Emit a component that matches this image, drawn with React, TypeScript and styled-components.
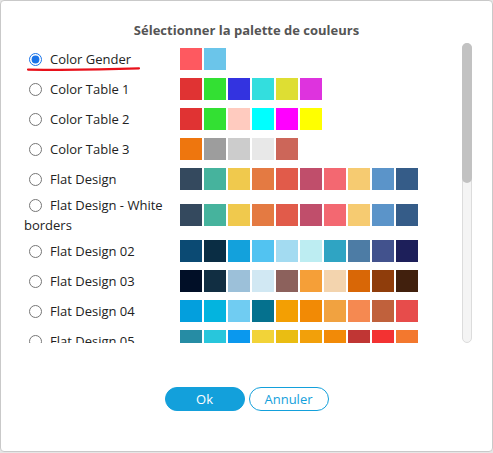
import styled, { createGlobalStyle } from "styled-components";
import { useState } from "react";

const GlobalStyle = createGlobalStyle`
  html, body {
    margin: 0;
    padding: 0;
    background: #e6e6e6;
  }
  body {
    font-family: "Open Sans", "Liberation Sans", sans-serif;
  }
`;

const Dialog = styled.div`
  position: relative;
  box-sizing: border-box;
  width: 493px;
  height: 452px;
  background: #ffffff;
  border: 1px solid #c9c9c9;
  border-radius: 4px;
  display: flex;
  flex-direction: column;
`;

const Title = styled.h2`
  margin: 20px 0 4px;
  font-size: 13px;
  line-height: 18px;
  font-weight: 700;
  color: #555555;
  text-align: center;
`;

const ListFrame = styled.div`
  display: flex;
  margin: 0 20px 0 23px;
  height: 300px;
`;

const List = styled.div`
  flex: 1;
  overflow-y: scroll;
  padding-top: 1px;
  box-sizing: border-box;
  scrollbar-width: none;

  &::-webkit-scrollbar {
    display: none;
  }
`;

const Track = styled.div`
  position: relative;
  box-sizing: border-box;
  width: 10px;
  height: 100%;
  flex: none;
  background: #f4f4f4;
  border: 1px solid #dcdcdc;
  border-radius: 5px;
`;

// thumb sits over the track, its top follows the scroll position
const Thumb = styled.div`
  position: absolute;
  left: -1px;
  right: -1px;
  height: 140px;
  background: #c2c2c2;
  border-radius: 5px;
`;

const Row = styled.div`
  position: relative;
  display: flex;
  align-items: center;
  min-height: 30px;
  gap: 4px;
`;

const Label = styled.label`
  width: 152px;
  flex: none;
  padding: 1px 0;
  font-size: 13px;
  line-height: 20px;
  color: #222222;
  cursor: pointer;
`;

const Radio = styled.input`
  width: 13px;
  height: 13px;
  margin: 0 8px 0 5px;
  vertical-align: -2px;
  accent-color: #1a73e8;
`;

const Swatches = styled.div`
  display: flex;
  gap: 2px;
`;

const Swatch = styled.span<{ $color: string }>`
  width: 22px;
  height: 22px;
  background: ${(p) => p.$color};
`;

const Mark = styled.svg`
  position: absolute;
  left: 0;
  top: 22px;
  pointer-events: none;
`;

const Footer = styled.div`
  display: flex;
  justify-content: center;
  gap: 4px;
  margin-top: 44px;
`;

const Button = styled.button<{ $primary?: boolean }>`
  box-sizing: border-box;
  width: 80px;
  height: 24px;
  padding: 0;
  border-radius: 12px;
  border: 1px solid #13a0db;
  background: ${(p) => (p.$primary ? "#13a0db" : "#ffffff")};
  color: ${(p) => (p.$primary ? "#ffffff" : "#13a0db")};
  font-family: "Open Sans", "Liberation Sans", sans-serif;
  font-size: 13px;
  cursor: pointer;
`;

const flat = [
  "#34495e", "#46b39d", "#f0c94d", "#e47a42", "#e15b4a",
  "#c04e6b", "#f36871", "#f6cb71", "#5b94c9", "#355c88",
];

const palettes: { name: string; colors: string[] }[] = [
  { name: "Color Gender", colors: ["#fe5960", "#6bc5ea"] },
  { name: "Color Table 1", colors: ["#e03333", "#33e033", "#3333e0", "#33dede", "#dede33", "#de33de"] },
  { name: "Color Table 2", colors: ["#e03333", "#33e033", "#ffcbbf", "#00ffff", "#ff00ff", "#ffff00"] },
  { name: "Color Table 3", colors: ["#ee760e", "#9d9d9d", "#cccccc", "#e8e8e8", "#cc6659"] },
  { name: "Flat Design", colors: flat },
  { name: "Flat Design - White borders", colors: flat },
  { name: "Flat Design 02", colors: ["#0b4a73", "#0a2d44", "#13a1dc", "#52c3f1", "#a3dbf1", "#bdedf2", "#2fa4c3", "#4d7ca5", "#42528d", "#1d1f5a"] },
  { name: "Flat Design 03", colors: ["#010f27", "#112e42", "#9cc0d9", "#d1e8f3", "#8c615c", "#f59f38", "#f3d4ae", "#d96706", "#8f3d0b", "#41200d"] },
  { name: "Flat Design 04", colors: ["#039fdd", "#03b4df", "#70ccf2", "#05718e", "#f39f03", "#f28a05", "#f1a240", "#f58951", "#c0613c", "#e74c4b"] },
  { name: "Flat Design 05", colors: ["#268ca4", "#28c6dc", "#0a98ee", "#f2d338", "#eabd12", "#f2a00a", "#f28a07", "#c03634", "#f33232", "#f3782e"] },
  { name: "Flat Design 06", colors: ["#1abc9c", "#2ecc71", "#3498db", "#9b59b6", "#34495e", "#f1c40f", "#e67e22", "#e74c3c", "#ecf0f1", "#95a5a6"] },
  { name: "Flat Design 07", colors: ["#16a085", "#27ae60", "#2980b9", "#8e44ad", "#2c3e50", "#f39c12", "#d35400", "#c0392b", "#bdc3c7", "#7f8c8d"] },
  { name: "Flat Design 08", colors: ["#264653", "#2a9d8f", "#e9c46a", "#f4a261", "#e76f51", "#606c38", "#283618", "#fefae0", "#dda15e", "#bc6c25"] },
  { name: "Flat Design 09", colors: ["#003049", "#d62828", "#f77f00", "#fcbf49", "#eae2b7", "#8ecae6", "#219ebc", "#023047", "#ffb703", "#fb8500"] },
  { name: "Flat Design 10", colors: ["#355070", "#6d597a", "#b56576", "#e56b6f", "#eaac8b", "#22223b", "#4a4e69", "#9a8c98", "#c9ada7", "#f2e9e4"] },
  { name: "Flat Design 11", colors: ["#0081a7", "#00afb9", "#fdfcdc", "#fed9b7", "#f07167", "#3d405b", "#81b29a", "#f2cc8f", "#e07a5f", "#f4f1de"] },
  { name: "Flat Design 12", colors: ["#5f0f40", "#9a031e", "#fb8b24", "#e36414", "#0f4c5c", "#ffbe0b", "#fb5607", "#ff006e", "#8338ec", "#3a86ff"] },
  { name: "Flat Design 13", colors: ["#ffadad", "#ffd6a5", "#fdffb6", "#caffbf", "#9bf6ff", "#a0c4ff", "#bdb2ff", "#ffc6ff", "#fffffc", "#d8e2dc"] },
  { name: "Flat Design 14", colors: ["#001219", "#005f73", "#0a9396", "#94d2bd", "#e9d8a6", "#ee9b00", "#ca6702", "#bb3e03", "#ae2012", "#9b2226"] },
  { name: "Flat Design 15", colors: ["#03045e", "#023e8a", "#0077b6", "#0096c7", "#00b4d8", "#48cae4", "#90e0ef", "#ade8f4", "#caf0f8", "#e0fbfc"] },
  { name: "Flat Design 16", colors: ["#582f0e", "#7f4f24", "#936639", "#a68a64", "#b6ad90", "#c2c5aa", "#a4ac86", "#656d4a", "#414833", "#333d29"] },
];

export default function App() {
  const [selected, setSelected] = useState("Color Gender");
  const [thumbTop, setThumbTop] = useState(-1);

  const onScroll = (e: React.UIEvent<HTMLDivElement>) => {
    const el = e.currentTarget;
    const max = el.scrollHeight - el.clientHeight;
    const ratio = max > 0 ? el.scrollTop / max : 0;
    setThumbTop(-1 + ratio * (el.clientHeight - 140));
  };

  return (
    <>
      <GlobalStyle />
      <Dialog>
        <Title>Sélectionner la palette de couleurs</Title>
        <ListFrame>
          <List onScroll={onScroll}>
            {palettes.map((p, i) => (
              <Row key={p.name}>
                <Label>
                  <Radio
                    type="radio"
                    name="palette"
                    checked={selected === p.name}
                    onChange={() => setSelected(p.name)}
                  />
                  {p.name}
                </Label>
                <Swatches>
                  {p.colors.map((c, j) => (
                    <Swatch key={j} $color={c} />
                  ))}
                </Swatches>
                {i === 0 && (
                  <Mark width="120" height="6" viewBox="0 0 120 6">
                    <path
                      d="M4 3.6 Q 60 4.4 115 2.4"
                      stroke="#e8101a"
                      strokeWidth="2.2"
                      fill="none"
                      strokeLinecap="round"
                    />
                  </Mark>
                )}
              </Row>
            ))}
          </List>
          <Track>
            <Thumb style={{ top: thumbTop }} />
          </Track>
        </ListFrame>
        <Footer>
          <Button $primary>Ok</Button>
          <Button>Annuler</Button>
        </Footer>
      </Dialog>
    </>
  );
}
